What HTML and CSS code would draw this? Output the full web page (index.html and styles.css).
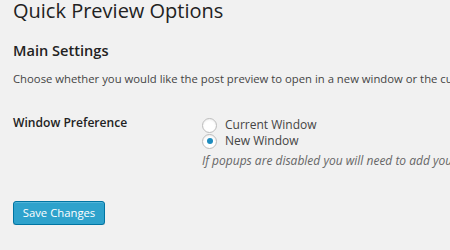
FILE: index.html
```html
<!DOCTYPE html>
<html lang="en">
  <head>
    <meta charset="UTF-8" />
    <meta name="viewport" content="width=device-width, initial-scale=1.0" />
    <title>Quick Preview Options</title>
    <link rel="stylesheet" href="styles.css">
  </head>
  <body>
    <div class="wrap">
      <h2>Quick Preview Options</h2>
      <form>
        <h3>Main Settings</h3>
        <p class="section-intro">Choose whether you would like the post preview to open in a new window or the current window.</p>
        <div class="form-table">
          <div class="form-label">Window Preference</div>
          <div class="form-field">
            <label class="radio-row">
              <input type="radio" name="qp_window" value="current" />
              <span>Current Window</span>
            </label>
            <label class="radio-row">
              <input type="radio" name="qp_window" value="new" checked />
              <span>New Window</span>
            </label>
            <p class="description">If popups are disabled you will need to add your site to the allowed list in your browser.</p>
          </div>
        </div>
        <p class="submit">
          <button type="button" class="button-primary">Save Changes</button>
        </p>
      </form>
    </div>
  </body>
</html>
```

FILE: styles.css
```css
*,
*::before,
*::after {
  box-sizing: border-box;
}
:root {
  --clr-bg: #f1f1f1;
  --clr-heading: #222;
  --clr-text: #444;
  --clr-muted: #666;
  --clr-blue: #2ea2cc;
  --clr-blue-dark: #0074a2;
  --ff-base: "Open Sans", "Liberation Sans", sans-serif;
}
body {
  margin: 0;
  font-family: var(--ff-base);
  font-size: 11.3px;
  color: var(--clr-text);
  background-color: var(--clr-bg);
  overflow: hidden;
}
.wrap {
  padding-left: 13px;
  white-space: nowrap;
}
h2 {
  margin: 0;
  padding-top: 1px;
  font-size: 20px;
  font-weight: 400;
  line-height: 20px;
  color: var(--clr-heading);
}
h3 {
  margin: 20px 0 0;
  font-size: 14.6px;
  font-weight: 600;
  line-height: 18px;
  color: var(--clr-heading);
}
.section-intro {
  margin: 11px 0 0;
  line-height: 18px;
}
.form-table {
  display: grid;
  grid-template-columns: 189px 1fr;
  margin-top: 26px;
}
.form-label {
  font-size: 12.1px;
  font-weight: 600;
  line-height: 18px;
  color: var(--clr-heading);
}
.form-field {
  padding-top: 3px;
}
.radio-row {
  display: flex;
  align-items: center;
  gap: 8px;
  height: 16px;
  font-size: 12px;
  line-height: 16px;
  color: var(--clr-text);
}
.radio-row input {
  appearance: none;
  display: grid;
  place-content: center;
  width: 15px;
  height: 15px;
  margin: 0;
  border: 1px solid #bbb;
  border-radius: 50%;
  background: #fff;
  box-shadow: inset 0 1px 2px rgba(0, 0, 0, 0.07);
}
.radio-row input:checked::before {
  content: "";
  width: 6px;
  height: 6px;
  border-radius: 50%;
  background-color: #1e8cbe;
}
.description {
  margin: 4px 0 0;
  font-size: 12px;
  line-height: 16px;
  font-style: italic;
  color: var(--clr-muted);
}
.submit {
  margin: 32px 0 0;
}
.button-primary {
  width: 92px;
  height: 24px;
  padding: 0;
  font-family: var(--ff-base);
  font-size: 11.3px;
  line-height: 22px;
  color: #fff;
  background-color: var(--clr-blue);
  border: 1px solid var(--clr-blue-dark);
  border-radius: 3px;
  box-shadow: inset 0 1px 0 rgba(120, 200, 230, 0.5), 0 1px 0 rgba(0, 0, 0, 0.15);
  cursor: pointer;
}
```
